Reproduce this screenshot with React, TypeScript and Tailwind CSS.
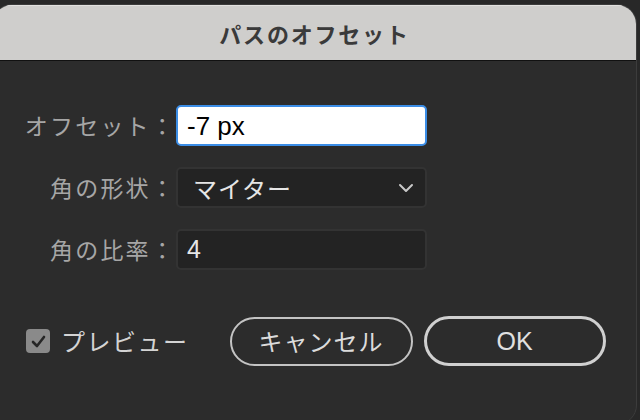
import React from "react";

const jp = { fontFamily: '"Noto Sans CJK JP", sans-serif' };
const lat = { fontFamily: '"Liberation Sans", "Noto Sans CJK JP", sans-serif' };

function Label({ children }: { children: React.ReactNode }) {
  return (
    <div
      className="w-[183px] text-right text-[23px] tracking-[2.2px] text-[#a6a6a6] leading-none"
      style={jp}
    >
      {children}
    </div>
  );
}

export default function App() {
  return (
    <div className="w-[640px] h-[420px] bg-[#282828] overflow-hidden">
      <div className="ml-[-8px] mt-[4px] w-[645px] h-[421px] rounded-[20px] overflow-hidden bg-[#2c2c2c] border border-[#3c3c3c] flex flex-col">
        <div className="h-[56px] shrink-0 bg-[#cfcecc] border-t border-[#e2e1df] border-b border-b-[#111111] flex items-center justify-center">
          <span className="text-[22px] font-bold tracking-[1.8px] text-[#3a3a3a] leading-none" style={jp}>
            パスのオフセット
          </span>
        </div>
        <div className="flex flex-col pt-[44px]">
          <div className="flex items-center h-[41px]">
            <Label>オフセット：</Label>
            <div className="w-[251px] h-[41px] rounded-[5px] border-2 border-[#3b8de6] bg-white flex items-center pl-[9px]">
              <span className="text-[26px] text-black leading-none" style={lat}>-7 px</span>
            </div>
          </div>
          <div className="flex items-center h-[41px] mt-[21px]">
            <Label>角の形状：</Label>
            <div className="w-[251px] h-[41px] rounded-[5px] border-2 border-[#333333] bg-[#232323] flex items-center pl-[15px] pr-[10px] justify-between">
              <span className="text-[24px] text-[#e6e6e6] tracking-[1px] leading-none" style={jp}>マイター</span>
              <svg width="16" height="10" viewBox="0 0 16 10" className="mr-[1px]">
                <path d="M2 2 L8 8 L14 2" fill="none" stroke="#c8c8c8" strokeWidth="2" strokeLinecap="round" strokeLinejoin="round" />
              </svg>
            </div>
          </div>
          <div className="flex items-center h-[41px] mt-[21px]">
            <Label>角の比率：</Label>
            <div className="w-[251px] h-[41px] rounded-[5px] border-2 border-[#333333] bg-[#232323] flex items-center pl-[9px]">
              <span className="text-[25px] text-[#e6e6e6] leading-none" style={lat}>4</span>
            </div>
          </div>
          <div className="flex items-center mt-[46px] h-[50px]">
            <div className="ml-[33px] w-[24px] h-[24px] rounded-[4px] bg-[#8a8a8a] flex items-center justify-center">
              <svg width="15" height="13" viewBox="0 0 15 13">
                <path d="M2 7 L6 11 L13 2" fill="none" stroke="#262626" strokeWidth="2.6" strokeLinecap="round" strokeLinejoin="round" />
              </svg>
            </div>
            <span className="ml-[11px] text-[24px] text-[#d4d4d4] tracking-[1.5px] leading-none" style={jp}>
              プレビュー
            </span>
            <div className="ml-[41px] w-[183px] h-[49px] rounded-full border-2 border-[#c4c4c4] flex items-center justify-center">
              <span className="text-[24px] text-[#dcdcdc] tracking-[1px] leading-none" style={jp}>キャンセル</span>
            </div>
            <div className="ml-[11px] w-[182px] h-[50px] rounded-full border-[3px] border-[#d0d0d0] flex items-center justify-center">
              <span className="text-[25px] text-[#e0e0e0] leading-none" style={lat}>OK</span>
            </div>
          </div>
        </div>
      </div>
    </div>
  );
}
